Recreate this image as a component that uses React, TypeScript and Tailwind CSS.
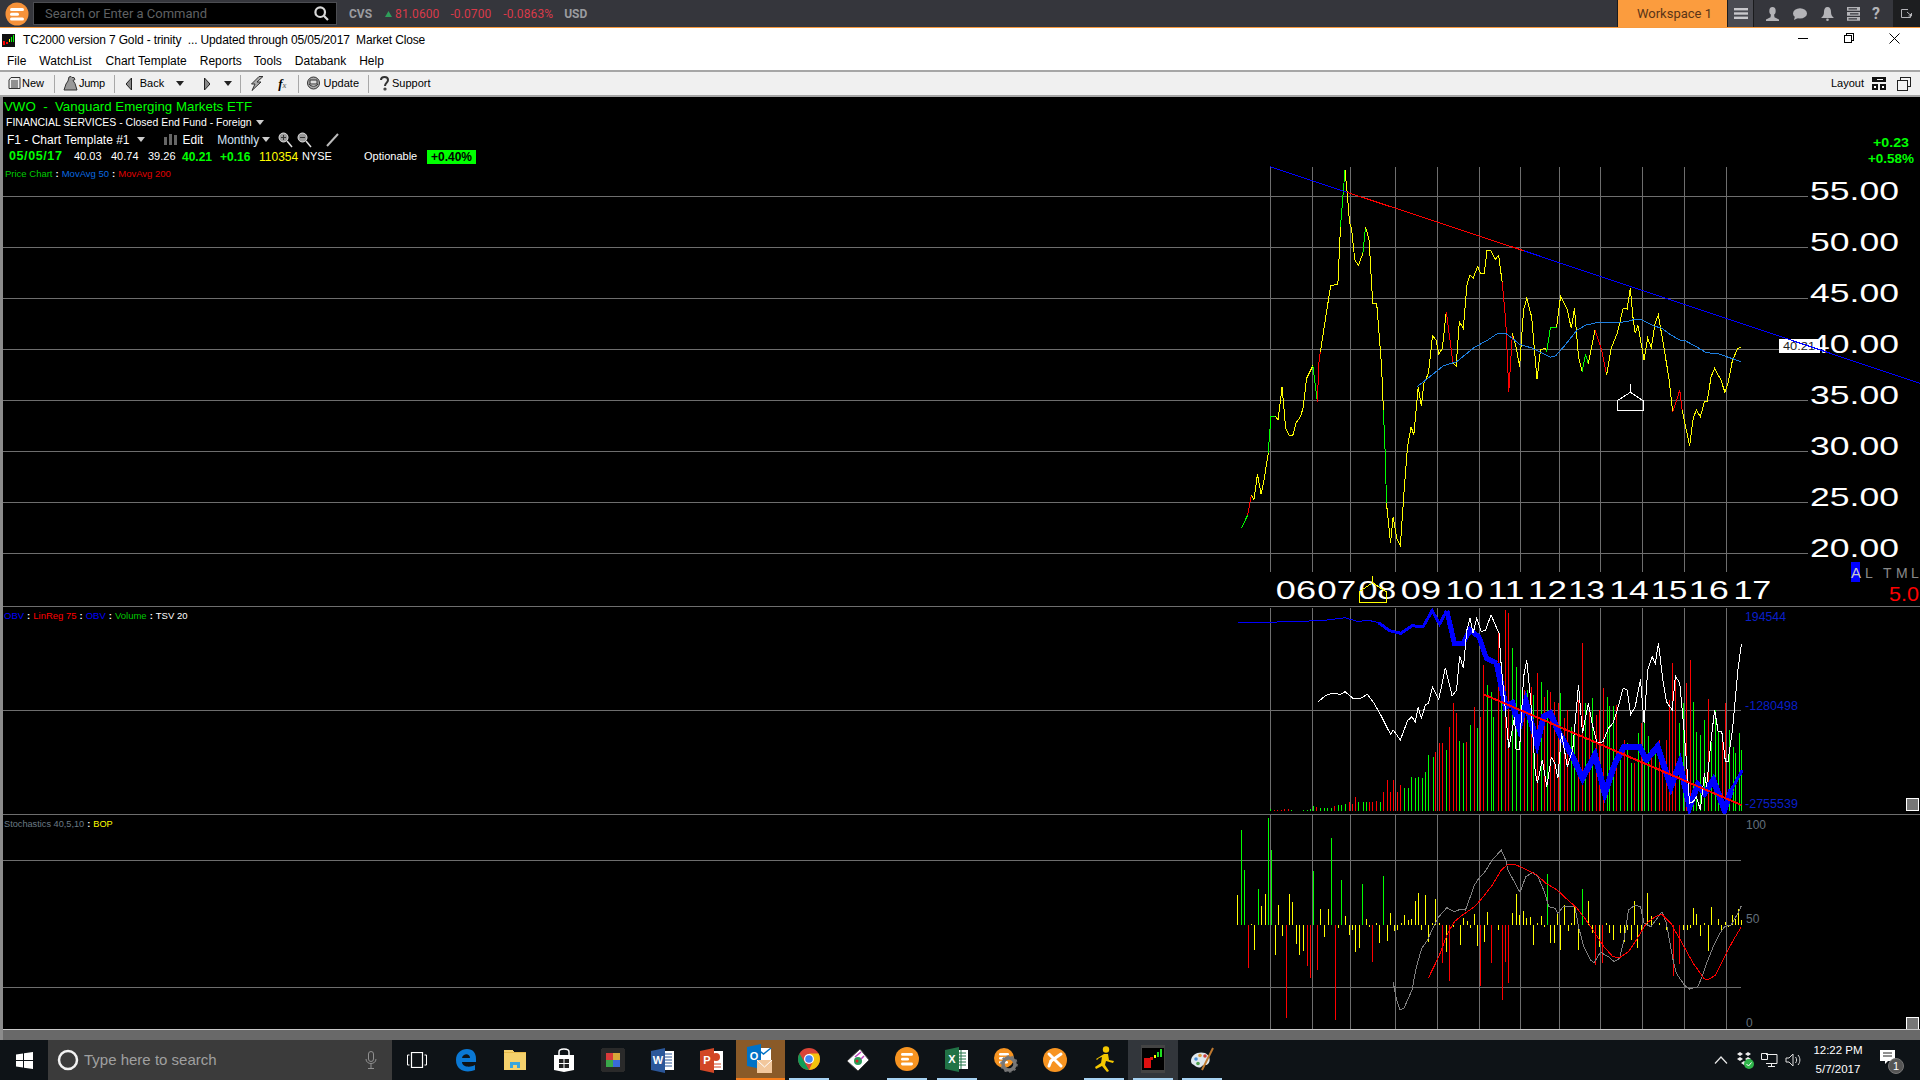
import React from "react";

const G = "#00ff00", R = "#ff0000", Y = "#ffff00";
const zx = (x: number) => 1220 + x / 2.24;
const rx = (x: number) => Math.round(zx(x)) + 0.5;
const toPts = (s: string, oy: number) =>
  s.trim().split(/\s+/).map((p) => {
    const [a, b] = p.split(",").map(Number);
    return `${zx(a).toFixed(1)},${(oy + b / 3).toFixed(1)}`;
  }).join(" ");

const priceSegs: [string, string][] = [
  [G, "48,1105 62,1065"], [R, "62,1065 70,1005"],
  [Y, "70,1005 76,1020 84,942 92,1003 100,950 108,880"], [G, "108,880 114,770 124,768"],
  [Y, "124,768 130,780 139,680 147,805 155,825 163,826 170,790 180,770 186,745 194,655 208,617"],
  [G, "208,617 218,725"], [R, "218,725 222,600 225,575"],
  [Y, "225,575 238,460 248,377 264,372 270,200"], [G, "270,200 280,30"],
  [Y, "280,30 285,100 290,185 295,210 302,300 310,316 320,280"], [G, "320,280 326,200"],
  [Y, "326,200 334,240 342,430 351,430 362,620 366,750"], [G, "366,750 370,880 373,1030"],
  [Y, "373,1030 382,1150 388,1070 396,1135 404,1157 412,1000 420,860 428,800 434,825 444,680 451,737 457,670 467,640 476,527 484,540 490,583 498,565 507,455"],
  [R, "507,455 522,610"],
  [Y, "522,610 529,618 536,485 545,505 553,375 560,345 567,355 577,320 584,340 592,340 598,270 606,270 617,298 624,286 632,365"],
  [R, "632,365 640,480 647,695 655,520"],
  [Y, "655,520 663,560 671,620 680,450 687,415 698,470 710,658 718,570 728,565 732,575"],
  [G, "732,575 740,502 754,502"],
  [Y, "754,502 763,408 778,450 787,505 794,445 803,590 811,635"], [G, "811,635 819,583 825,612"],
  [Y, "825,612 840,510"], [R, "840,510 855,570 866,645"],
  [Y, "866,645 876,565 890,520 903,445 912,447 919,385 925,470 930,520 936,495 950,600 958,535 966,562 975,487 982,465 992,545 1005,650 1014,757"],
  [R, "1014,757 1030,690 1035,750"],
  [Y, "1035,750 1052,857 1060,775 1067,750 1076,770 1085,725 1091,725 1100,650 1108,625 1122,660 1131,697 1138,670 1148,600 1160,565 1168,562"],
];
const ma50 = "440,682 470,650 500,618 530,605 570,562 600,540 622,520 640,520 655,535 670,552 700,565 720,578 740,592 752,587 770,560 800,510 820,495 848,487 880,489 910,485 930,478 945,480 970,497 990,505 1010,525 1030,540 1040,541 1060,555 1090,578 1115,581 1135,590 1168,605";

const vLines = [113, 205, 292, 393, 487, 581, 673, 760, 852, 946, 1040, 1134];
const priceGrid: [string, number][] = [["55.00", 108], ["50.00", 262], ["45.00", 415], ["40.00", 568], ["35.00", 721], ["30.00", 874], ["25.00", 1027], ["20.00", 1180]];
const years: [string, number, number][] = [["06", 125, 215], ["07", 218, 305], ["08", 310, 395], ["09", 405, 495], ["10", 505, 590], ["11", 600, 682], ["12", 690, 777], ["13", 780, 862], ["14", 872, 960], ["15", 965, 1047], ["16", 1050, 1140], ["17", 1150, 1235]];

const volBars: [number, string, number][] = [
  [113,"g",627],[120,"r",630],[128,"r",630],[136,"r",630],[144,"r",628],[152,"r",628],[160,"g",630],[186,"g",630],[194,"g",630],[202,"g",627],[208,"g",618],[216,"r",622],[224,"g",624],[232,"g",624],[240,"g",624],[248,"g",624],[255,"r",618],[265,"g",615],[272,"g",615],[280,"g",612],[288,"r",605],[295,"r",612],[303,"r",590],[310,"g",605],[320,"g",605],[326,"g",605],[334,"r",605],[341,"r",605],[350,"r",603],[358,"g",605],
  [366,"r",575],[373,"r",540],[380,"r",577],[387,"r",540],[396,"r",575],[404,"r",555],[413,"g",563],[420,"g",563],[428,"g",530],[436,"g",535],[444,"g",530],[452,"g",533],[460,"g",515],[467,"g",465],[476,"g",470],[482,"r",457],[490,"r",430],[498,"r",430],[506,"g",450],[514,"r",380],[521,"r",310],[529,"r",340],[536,"g",423],[544,"g",430],[552,"r",425],[560,"g",375],[568,"r",320],[575,"g",385],[582,"r",350],[590,"r",195],[598,"g",255],[606,"g",275],[612,"g",350],[622,"r",95],[630,"g",300],[638,"r",30],[646,"r",40],[655,"g",145],[663,"g",200],[671,"g",270],[680,"r",270],[688,"g",270],[696,"r",260],[702,"g",285],[710,"r",220],[718,"g",245],[725,"r",290],[733,"g",270],[740,"r",275],[748,"r",305],[756,"r",310],[762,"g",280],[770,"r",355],[778,"r",330],[786,"g",380],[794,"g",400],[802,"r",300],[810,"r",130],[818,"g",310],[826,"r",330],[834,"g",295],[842,"r",345],[850,"r",330],[858,"r",265],[866,"g",290],[872,"g",318],[880,"g",318],[888,"r",315],[896,"g",450],[904,"r",420],[912,"g",430],[920,"g",490],[928,"r",490],[936,"g",400],[943,"r",370],[950,"g",360],[958,"g",408],[966,"r",460],[975,"g",435],[983,"r",420],[990,"r",475],[998,"r",420],[1005,"r",300],[1013,"r",190],[1020,"r",230],[1028,"g",370],[1036,"g",310],[1044,"r",250],[1052,"r",180],[1060,"g",305],[1067,"g",395],[1076,"g",405],[1084,"g",360],[1092,"r",298],[1100,"g",425],[1108,"g",330],[1116,"g",395],[1124,"r",400],[1132,"r",308],[1140,"g",390],[1148,"g",440],[1154,"g",460],[1162,"g",400],[1168,"g",450],
];
const obv: [number, string][] = [
  [1, "40,67 110,67 145,65 175,65 210,62 240,60 280,53 310,65 330,60 355,68"],
  [3, "355,68 380,92 405,100 430,77 455,80 475,32 492,72 508,32"],
  [5, "508,32 525,130 545,130 560,90 580,110 597,175 620,190"],
  [6, "620,190 640,320 655,310 670,380 685,305 710,430 725,350 740,340 760,400 790,470 812,535 840,465 862,580 885,490 905,440 940,440 955,480 980,440 1010,560 1030,490 1052,620 1070,555 1085,580 1105,540 1130,630 1145,570"],
  [3, "1145,570 1170,510"],
];
const tsv = "220,305 235,288 250,280 270,283 280,275 298,295 315,295 330,283 345,310 360,345 382,403 388,390 404,420 420,362 430,350 437,367 444,322 451,355 460,315 467,310 476,260 490,298 505,203 520,288 530,270 537,167 545,205 553,90 560,55 567,100 575,55 585,95 595,90 607,45 625,100 630,200 640,340 647,445 660,350 663,447 671,447 680,230 687,180 696,300 706,515 711,550 722,480 732,560 742,472 750,490 757,535 765,400 778,500 790,450 803,255 812,400 825,310 835,380 845,430 858,425 870,385 880,370 890,330 903,265 912,270 920,343 930,320 942,238 950,370 958,210 968,170 975,190 982,130 992,240 1000,305 1013,330 1020,228 1030,250 1040,400 1052,610 1060,605 1067,590 1076,630 1085,520 1090,560 1100,420 1108,330 1116,395 1124,395 1132,485 1138,485 1148,390 1160,210 1168,132";

const bop: [number, string, number][] = [
  [38,"y",255],[46,"g",60],[54,"g",180],[62,"r",473],[70,"y",342],[77,"y",420],[84,"g",237],[92,"y",288],[100,"y",252],[108,"g",25],[115,"g",120],[123,"y",435],[131,"y",285],[139,"y",378],[147,"r",623],[155,"y",252],[162,"y",275],[171,"y",402],[178,"y",435],[186,"y",422],[194,"r",468],[202,"r",503],[209,"g",183],[217,"r",480],[225,"y",297],[233,"y",380],[241,"y",297],[249,"g",85],[257,"r",630],[265,"y",354],[272,"g",210],[280,"y",318],[288,"y",374],[295,"y",360],[303,"y",425],[311,"y",415],[319,"g",222],[326,"y",328],[334,"y",350],[341,"r",455],[350,"y",339],[357,"y",400],[366,"g",198],[373,"y",393],[381,"y",308],[389,"y",362],[397,"y",360],[405,"y",340],[413,"y",315],[420,"y",330],[428,"y",327],[436,"y",272],[444,"y",250],[451,"y",360],[459,"y",255],[467,"y",395],[474,"y",340],[482,"y",267],[490,"y",340],[498,"r",458],[506,"y",425],[514,"r",513],[522,"y",350],[529,"y",345],[537,"y",404],[545,"y",325],[553,"y",332],[560,"y",355],[568,"y",313],[576,"y",408],[582,"r",527],[591,"y",395],[599,"y",305],[607,"r",460],[615,"y",345],[623,"y",360],[631,"r",570],[638,"r",455],[646,"r",518],[655,"y",310],[662,"y",252],[670,"y",315],[678,"y",303],[686,"y",325],[694,"y",320],[702,"y",404],[710,"y",338],[718,"y",318],[725,"y",350],[732,"g",192],[740,"y",400],[748,"y",398],[755,"y",310],[762,"y",420],[771,"y",285],[779,"y",362],[787,"y",340],[794,"y",290],[802,"y",420],[810,"g",237],[818,"y",345],[825,"y",272],[834,"y",370],[841,"r",465],[849,"y",410],[856,"r",460],[864,"y",340],[872,"y",370],[881,"y",390],[888,"y",345],[896,"y",370],[904,"y",395],[912,"y",360],[920,"y",390],[928,"y",272],[935,"y",415],[943,"y",365],[950,"y",345],[957,"y",248],[965,"y",318],[975,"y",345],[983,"y",340],[990,"y",345],[1000,"y",360],[1014,"r",498],[1022,"y",345],[1029,"r",462],[1037,"y",360],[1045,"y",360],[1052,"y",355],[1060,"y",295],[1067,"y",312],[1076,"y",378],[1084,"y",340],[1092,"y",424],[1100,"y",290],[1108,"y",345],[1115,"y",327],[1123,"y",362],[1131,"y",337],[1139,"y",350],[1147,"y",315],[1154,"y",328],[1161,"y",297],[1168,"y",330],
];
const stochGray = "388,517 395,565 403,600 412,595 430,540 440,470 452,415 465,390 480,345 490,320 508,293 525,305 540,297 550,300 570,225 580,205 592,188 610,150 630,120 640,150 645,180 655,205 672,247 685,200 700,187 712,200 725,240 737,290 750,295 757,310 770,288 785,290 795,290 803,350 815,410 830,450 838,458 852,427 870,440 883,455 895,445 905,390 915,300 930,285 942,290 950,340 965,350 990,305 1000,340 1015,450 1022,490 1040,525 1052,537 1070,530 1080,500 1090,460 1105,410 1120,370 1130,350 1145,345 1160,310 1168,287";
const stochRed = "467,503 490,440 510,370 525,335 540,318 570,290 590,260 610,225 630,180 645,163 660,163 680,175 710,195 730,220 755,240 775,265 800,295 820,330 840,370 860,410 880,440 895,443 915,425 935,385 955,340 975,320 990,313 1010,340 1035,400 1060,460 1085,507 1095,508 1110,495 1130,440 1150,390 1168,350";

const col = (c: string) => (c === "g" ? G : c === "r" ? R : Y);
const GRID = "#6e6e6e";

function Line({ pts, color, oy, w = 1 }: { pts: string; color: string; oy: number; w?: number }) {
  return <polyline points={toPts(pts, oy)} fill="none" stroke={color} strokeWidth={w} />;
}

function PriceSvg() {
  return (
    <svg viewBox="3 97 1917 509" className="col-start-1 row-start-1 w-full h-full font-['Liberation_Sans',sans-serif]" shapeRendering="crispEdges">
      {priceGrid.map(([, y]) => <line key={y} x1={3} x2={1808} y1={Math.round(160 + y / 3) + 0.5} y2={Math.round(160 + y / 3) + 0.5} stroke={GRID} />)}
      {vLines.map((x) => <line key={x} x1={rx(x)} x2={rx(x)} y1={167} y2={572} stroke={GRID} />)}
      {priceGrid.map(([t, y]) => (
        <text key={t} x={1810} y={160 + y / 3 + 4} textLength={89} lengthAdjust="spacingAndGlyphs" fontSize={26} fill="#fff">{t}</text>
      ))}
      {years.map(([t, a, b]) => (
        <text key={t} x={zx(a)} y={599} textLength={(b - a) / 2.24} lengthAdjust="spacingAndGlyphs" fontSize={26} fill="#fff">{t}</text>
      ))}
      <rect x={1779} y={339} width={41} height={14} fill="#fff" />
      <text x={1783} y={350} fontSize={11} fill="#222" textLength={32} lengthAdjust="spacingAndGlyphs">40.21</text>
      {priceSegs.map(([c, p], i) => <Line key={i} pts={p} color={c} oy={160} />)}
      <Line pts={ma50} color="#1e7fe0" oy={160} />
      <Line pts="113,20 285,97" color="#0000ff" oy={160} />
      <Line pts="285,97 680,272" color="#ff0000" oy={160} />
      <Line pts="680,272 1568,670" color="#0000ff" oy={160} />
      <Line pts="919,672 919,697" color="#fff" oy={160} />
      <polygon points={toPts("919,697 948,722 948,750 890,750 890,722", 160)} fill="none" stroke="#fff" />
      <Line pts="342,1248 342,1268" color={Y} oy={160} />
      <polygon points={toPts("342,1268 372,1295 372,1328 312,1328 312,1295", 160)} fill="none" stroke={Y} />
      <rect x={1851} y={562} width={9} height={20} fill="#0000ff" />
      <text x={1851} y={578} fontSize={15} fill="#c8c8c8">A</text>
      <text x={1865} y={578} fontSize={14} fill="#8a8a8a">L</text>
      <text x={1883} y={578} fontSize={14} fill="#8a8a8a">T</text>
      <text x={1896} y={578} fontSize={14} fill="#8a8a8a">M</text>
      <text x={1911} y={578} fontSize={14} fill="#8a8a8a">L</text>
      <text x={1889} y={601} fontSize={21} fill="#ff0000" textLength={30} lengthAdjust="spacingAndGlyphs">5.0</text>
      <text x={1873} y={147} fontSize={13} fontWeight={700} fill={G} textLength={36} lengthAdjust="spacingAndGlyphs">+0.23</text>
      <text x={1868} y={163} fontSize={13} fontWeight={700} fill={G} textLength={46} lengthAdjust="spacingAndGlyphs">+0.58%</text>
    </svg>
  );
}

function VolumeSvg() {
  return (
    <svg viewBox="3 607 1917 207" className="col-start-1 row-start-1 w-full h-full font-['Liberation_Sans',sans-serif]" shapeRendering="crispEdges">
      <line x1={3} x2={1741} y1={710.5} y2={710.5} stroke={GRID} />
      {vLines.map((x) => <line key={x} x1={rx(x)} x2={rx(x)} y1={608} y2={811} stroke={GRID} />)}
      {volBars.map(([x, c, t], i) => <line key={i} x1={rx(x)} x2={rx(x)} y1={600 + t / 3} y2={811} stroke={col(c)} />)}
      {obv.map(([w, p], i) => <Line key={i} pts={p} color="#0000ff" oy={600} w={w} />)}
      <Line pts={tsv} color="#fff" oy={600} />
      <Line pts="590,283 1168,615" color="#ff0000" oy={600} w={2} />
      <text x={1745} y={621} fontSize={12} fill="#0a1fc8" textLength={41} lengthAdjust="spacingAndGlyphs">194544</text>
      <text x={1745} y={710} fontSize={12} fill="#0a1fc8" textLength={53} lengthAdjust="spacingAndGlyphs">-1280498</text>
      <text x={1745} y={808} fontSize={12} fill="#0a1fc8" textLength={53} lengthAdjust="spacingAndGlyphs">-2755539</text>
      <rect x={1906.5} y={798.5} width={12} height={12} fill="#777" stroke="#fff" />
    </svg>
  );
}

function StochSvg() {
  return (
    <svg viewBox="3 815 1917 214" className="col-start-1 row-start-1 w-full h-full font-['Liberation_Sans',sans-serif]" shapeRendering="crispEdges">
      <line x1={3} x2={1741} y1={860.5} y2={860.5} stroke={GRID} />
      <line x1={3} x2={1741} y1={987.5} y2={987.5} stroke={GRID} />
      {vLines.map((x) => <line key={x} x1={rx(x)} x2={rx(x)} y1={815} y2={1029} stroke={GRID} />)}
      {bop.map(([x, c, t], i) => <line key={i} x1={rx(x)} x2={rx(x)} y1={810 + t / 3} y2={925} stroke={col(c)} />)}
      <Line pts={stochGray} color="#808080" oy={810} />
      <Line pts={stochRed} color="#ff0000" oy={810} />
      <text x={1746} y={829} fontSize={12} fill="#64707c">100</text>
      <text x={1746} y={923} fontSize={12} fill="#64707c">50</text>
      <text x={1746} y={1027} fontSize={12} fill="#64707c">0</text>
      <path d="M1906.5 1029 V1017.5 H1918.5 V1029" fill="#777" stroke="#fff" />
    </svg>
  );
}

const Sep = ({ ml }: { ml: string }) => <div className={`w-px h-[18px] bg-[#a8a8a8] ${ml}`} />;
const Caret = ({ className, color = "#222" }: { className?: string; color?: string }) => (
  <svg width="8" height="5" viewBox="0 0 8 5" className={className}><path d="M0 0h8L4 5z" fill={color} /></svg>
);

function TopBar() {
  return (
    <div className="flex h-[27px] bg-[#35363c] items-center shrink-0 font-['Roboto',sans-serif]">
      <div className="w-[33px] flex justify-center">
        <svg width="24" height="24" viewBox="0 0 24 24">
          <circle cx="12" cy="12" r="11.5" fill="#f6923a" />
          <rect x="5" y="6" width="14" height="3" rx="1.5" fill="#fff" />
          <rect x="5" y="10.7" width="9" height="3" rx="1.5" fill="#fff" />
          <rect x="5" y="15.4" width="14" height="3" rx="1.5" fill="#fff" />
        </svg>
      </div>
      <div className="w-[304px] h-[23px] bg-black border border-[#4c4d52] flex items-center pl-[11px] pr-[7px] justify-between">
        <span className="text-[13px] text-[#5f6063]">Search or Enter a Command</span>
        <svg width="15" height="15" viewBox="0 0 15 15" fill="none" stroke="#d8d8d8" strokeWidth="2.2"><circle cx="6.2" cy="6.2" r="4.8" /><path d="M9.8 9.8 14 14" /></svg>
      </div>
      <span className="ml-[12px] text-[12px] font-bold text-[#9b9ca0]">CVS</span>
      <svg width="7" height="6" viewBox="0 0 7 6" className="ml-[13px]"><path d="M3.5 0 7 6H0z" fill="#2f9e5a" /></svg>
      <span className="ml-[3px] text-[12px] tracking-[0.1px] text-[#d93a4a]">81.0600</span>
      <span className="ml-[11px] text-[12px] tracking-[0.1px] text-[#d93a4a]">-0.0700</span>
      <span className="ml-[12px] text-[12px] tracking-[0.1px] text-[#d93a4a]">-0.0863%</span>
      <span className="ml-[11px] text-[12px] font-bold text-[#9b9ca0]">USD</span>
      <div className="flex-1" />
      <div className="w-px h-full bg-[#1a1b1d]" />
      <div className="w-[109px] h-full bg-[#fb9c3e] flex items-center justify-end pr-[15px] text-[13px] text-[#5a3416]">Workspace 1</div>
      <div className="w-px h-full bg-[#1a1b1d]" />
      <div className="w-[25px] h-full bg-[#4a4b52] flex items-center justify-center">
        <svg width="14" height="11" viewBox="0 0 14 11" fill="#c8c8cc"><rect width="14" height="2.4" /><rect y="4.3" width="14" height="2.4" /><rect y="8.6" width="14" height="2.4" /></svg>
      </div>
      <div className="w-px h-full bg-[#1a1b1d]" />
      <div className="w-[139px] h-full flex items-center">
        <svg width="13" height="14" viewBox="0 0 13 14" className="ml-[12px]" fill="#b4b4b8"><ellipse cx="6.5" cy="4" rx="3.2" ry="4" /><path d="M5 7h3l.5 3.2L13 12.5V14H0v-1.5L4.500 10.200z" /></svg>
        <svg width="14" height="12" viewBox="0 0 14 12" className="ml-[14px]" fill="#b4b4b8"><ellipse cx="7" cy="5.4" rx="7" ry="5.2" /><path d="M2 8l-1 4 4-2z" /></svg>
        <svg width="13" height="14" viewBox="0 0 13 14" className="ml-[14px]" fill="#b4b4b8"><path d="M6.500 0C9 0 10 2 10 5c0 3 1 4 3 6H0c2-2 3-3 3-6 0-3 1-5 3.500-5z" /><circle cx="6.500" cy="12.700" r="1.300" /></svg>
        <svg width="13" height="14" viewBox="0 0 13 14" className="ml-[13px]" fill="#b4b4b8"><path fillRule="evenodd" d="M0 0h13v3.800H0zM1.500 1.200v1.400H10V1.200zM0 5h13v3.800H0zM3 6.200v1.400h8.500V6.200zM0 10h13v3.800H0zM1.500 11.200v1.400H10v-1.400z" /></svg>
        <span className="ml-[12px] text-[16px] font-bold text-[#b4b4b8] leading-none">?</span>
      </div>
      <div className="w-[27px] h-full bg-[#1d1e20] flex items-center justify-center">
        <svg width="12" height="10" viewBox="0 0 12 10" fill="none" stroke="#b4b4b8"><path d="M7 .5H.5v8h9V5" /><path d="M6 3l4 3.500M10.500 4v3h-3" /></svg>
      </div>
    </div>
  );
}

function TitleMenu() {
  const menu: [string, string][] = [["File", "ml-[7px]"], ["WatchList", "ml-[13px]"], ["Chart Template", "ml-[14px]"], ["Reports", "ml-[13px]"], ["Tools", "ml-[12px]"], ["Databank", "ml-[13px]"], ["Help", "ml-[13px]"]];
  return (
    <div className="bg-white h-[42px] shrink-0 font-['Liberation_Sans',sans-serif] text-black">
      <div className="flex h-[22px] items-center">
        <svg width="13" height="13" viewBox="0 0 13 13" className="ml-[2px] mt-[2px]" shapeRendering="crispEdges">
          <rect width="13" height="13" fill="#111" /><rect x="1" y="7" width="2" height="4" fill="#f00" /><rect x="4" y="8" width="2" height="2" fill="#f00" /><rect x="7" y="5" width="1" height="3" fill="#ff0" /><rect x="9" y="3" width="1" height="5" fill="#0f0" /><rect x="11" y="1" width="1" height="7" fill="#0f0" />
        </svg>
        <span className="ml-[8px] mt-[2px] text-[12px] tracking-[-0.14px] whitespace-pre">TC2000 version 7 Gold - trinity  ... Updated through 05/05/2017  Market Close</span>
        <div className="flex-1" />
        <svg width="10" height="1" className="mt-[-2px]"><rect width="10" height="1" fill="#000" /></svg>
        <svg width="10" height="10" viewBox="0 0 10 10" className="ml-[36px] mt-[-2px]" fill="none" stroke="#000" shapeRendering="crispEdges"><path d="M.5 2.500h7v7h-7zM2.500 2.500v-2h7v7h-2" /></svg>
        <svg width="11" height="11" viewBox="0 0 11 11" className="ml-[35px] mr-[20px] mt-[-2px]" stroke="#000"><path d="M.5.5l10 10M10.500.5l-10 10" /></svg>
      </div>
      <div className="flex h-[20px] items-center text-[12px] pt-[1px]">
        {menu.map(([t, m]) => <span key={t} className={m}>{t}</span>)}
      </div>
    </div>
  );
}

function Toolbar() {
  return (
    <div className="h-[27px] shrink-0 bg-[#f0f0f0] border-t-[2px] border-b-[2px] border-[#a6a6a6] flex items-center text-[11px] text-black font-['Liberation_Sans',sans-serif]">
      <svg width="13" height="14" viewBox="0 0 13 14" className="ml-[8px]" fill="#eee" stroke="#333"><path d="M3 .5h9v11H1V3z" /><path d="M3 4h7M3 6h7M3 8h7M3 10h7" /></svg>
      <span className="ml-[1px]">New</span>
      <Sep ml="ml-[10px]" />
      <svg width="16" height="15" viewBox="0 0 16 15" className="ml-[8px]" fill="#999" stroke="#333"><path d="M1 14l2-6 2-3 1-4 2-.5 1 1 2 0 1 2-2 1 2 3 2 6.500z" /></svg>
      <span className="tracking-[-0.3px]">Jump</span>
      <Sep ml="ml-[9px]" />
      <svg width="6" height="12" viewBox="0 0 6 12" className="ml-[11px]"><path d="M5.500 0v12L0 6z" fill="#888" stroke="#222" /></svg>
      <span className="ml-[8px]">Back</span>
      <Caret className="ml-[12px]" />
      <svg width="6" height="12" viewBox="0 0 6 12" className="ml-[20px]"><path d="M.5 0v12L6 6z" fill="#888" stroke="#222" /></svg>
      <Caret className="ml-[14px]" />
      <Sep ml="ml-[8px]" />
      <svg width="14" height="15" viewBox="0 0 14 15" className="ml-[9px]" fill="#aaa" stroke="#333"><path d="M9 .5h4L7 6h4L2 14.500 5 8H1.500z" /></svg>
      <span className="ml-[14px] font-['Liberation_Serif',serif] italic font-bold text-[13px]">f<span className="text-[8px] text-[#777]">x</span></span>
      <Sep ml="ml-[11px]" />
      <svg width="15" height="15" viewBox="0 0 15 15" className="ml-[7px]" fill="#aaa" stroke="#333"><circle cx="7.500" cy="7" r="6" /><path d="M3 8c2 3 7 3 9 0M4 4h7v4H4z" fill="#ddd" /></svg>
      <span className="ml-[3px]">Update</span>
      <Sep ml="ml-[9px]" />
      <svg width="11" height="15" viewBox="0 0 11 15" className="ml-[10px]" fill="none" stroke="#333" strokeWidth="2"><path d="M2 4c0-4 7-4 7 0 0 3-3 2.500-3 6" /><circle cx="6" cy="13" r=".6" /></svg>
      <span className="ml-[2px]">Support</span>
      <div className="flex-1" />
      <span>Layout</span>
      <svg width="14" height="13" viewBox="0 0 14 13" className="ml-[8px]" shapeRendering="crispEdges"><rect width="14" height="5" fill="#111" /><rect y="7" width="6" height="6" fill="#111" /><rect x="8" y="7" width="6" height="6" fill="#111" /><rect x="5" y="2" width="6" height="1" fill="#fff" /><rect x="2" y="9" width="2" height="2" fill="#fff" /><rect x="10" y="9" width="2" height="2" fill="#fff" /></svg>
      <svg width="14" height="14" viewBox="0 0 14 14" className="ml-[11px] mr-[9px]" fill="#f5f5f5" stroke="#222" shapeRendering="crispEdges"><path d="M3.500.5h10v9h-10z" /><path d="M.5 3.500h10v10H.5z" /></svg>
    </div>
  );
}

function ChartHeader() {
  return (
    <div className="col-start-1 row-start-1 self-start pl-[1px] pt-[2px] text-white font-['Liberation_Sans',sans-serif]">
      <div className="h-[15px] leading-[15px] text-[13.3px] text-[#00ff00] whitespace-pre">VWO  -  Vanguard Emerging Markets ETF</div>
      <div className="h-[17px] flex items-center text-[10.5px] pl-[2px]">
        FINANCIAL SERVICES - Closed End Fund - Foreign
        <Caret className="ml-[4px]" color="#ccc" />
      </div>
      <div className="h-[17px] flex items-center text-[12px] pl-[3px]">
        <span>F1 - Chart Template #1</span>
        <Caret className="ml-[7px]" color="#ccc" />
        <svg width="14" height="11" viewBox="0 0 14 11" className="ml-[19px]" fill="#666"><rect y="3" width="3" height="8" /><rect x="5" width="3" height="11" /><rect x="10" y="1" width="3" height="10" /></svg>
        <span className="ml-[5px]">Edit</span>
        <span className="ml-[14px] text-[#d6e4f5]">Monthly</span>
        <Caret className="ml-[3px]" color="#ccc" />
        <svg width="15" height="16" viewBox="0 0 15 16" className="ml-[8px]" fill="#999" stroke="#e0e0e0"><circle cx="5.500" cy="5.500" r="4.500" /><path d="M9 9l5 6" strokeWidth="1.500" /><path d="M3 5.500h5M5.500 3v5" stroke="#333" /></svg>
        <svg width="15" height="16" viewBox="0 0 15 16" className="ml-[4px]" fill="#999" stroke="#e0e0e0"><circle cx="5.500" cy="5.500" r="4.500" /><path d="M9 9l5 6" strokeWidth="1.500" /><path d="M3 5.500h5" stroke="#333" /></svg>
        <svg width="13" height="14" viewBox="0 0 13 14" className="ml-[14px]" stroke="#bbb" strokeWidth="2"><path d="M1 13 12 1" /></svg>
      </div>
      <div className="h-[17px] flex items-center text-[11px] pl-[5px]">
        <span className="w-[65px] font-bold text-[12.5px] tracking-[0.6px] text-[#00ff00]">05/05/17</span>
        <span className="w-[37px]">40.03</span>
        <span className="w-[37px]">40.74</span>
        <span className="w-[34px]">39.26</span>
        <span className="w-[38px] font-bold text-[12px] text-[#00ff00]">40.21</span>
        <span className="w-[39px] font-bold text-[12px] text-[#00ff00]">+0.16</span>
        <span className="w-[43px] text-[12px] text-[#ffff00]">110354</span>
        <span className="w-[62px]">NYSE</span>
        <span className="w-[63px]">Optionable</span>
        <span className="w-[49px] h-[14px] leading-[14px] bg-[#00ff00] text-black text-[12px] font-bold text-center">+0.40%</span>
      </div>
      <div className="h-[14px] mt-[2px] flex items-center text-[9.5px] pl-[1px]">
        <span className="text-[#00cc00]">Price Chart</span>
        <span className="mx-[3px] font-bold">:</span>
        <span className="text-[#0a6ae0]">MovAvg 50</span>
        <span className="mx-[3px] font-bold">:</span>
        <span className="text-[#e00000]">MovAvg 200</span>
      </div>
    </div>
  );
}

function Tray() {
  return (
    <div className="flex items-center h-full text-white font-['Liberation_Sans',sans-serif]">
      <svg width="14" height="8" viewBox="0 0 14 8" fill="none" stroke="#e8e8e8" strokeWidth="1.200"><path d="M1 7.500 7 1l6 6.500" /></svg>
      <svg width="17" height="18" viewBox="0 0 17 18" className="ml-[9px]"><g fill="#eee"><path d="M3 1l3 2-3 2-3-2zM11 1l3 2-3 2-3-2zM3 6l3 2-3 2-3-2zM11 6l3 2-3 2-3-2zM7 10l3 2-3 2-3-2z" /></g><circle cx="12" cy="13" r="5" fill="#2fb44a" /><path d="M9.500 13l2 2 3-3.500" fill="none" stroke="#fff" /></svg>
      <svg width="17" height="15" viewBox="0 0 17 15" className="ml-[7px]" fill="none" stroke="#eee"><path d="M5 1.500h11v9H5M10.500 10.500v3M7 13.500h7M.5.500h6v6h-6z" /></svg>
      <svg width="16" height="14" viewBox="0 0 16 14" className="ml-[7px]" fill="none" stroke="#ddd"><path d="M1 5v4h3l4 4V1L4 5zM10.500 4c1.500 2 1.500 4 0 6M13 2c2.500 3 2.500 7 0 10" /></svg>
      <div className="ml-[8px] w-[58px] text-center text-[11.5px] leading-[19px]">
        <div>12:22 PM</div>
        <div>5/7/2017</div>
      </div>
      <div className="ml-[12px] mr-[17px] w-[24px] h-[24px] grid">
        <svg width="24" height="24" viewBox="0 0 24 24" className="col-start-1 row-start-1"><path d="M1 2h15v11H9l-3 3v-3H1z" fill="#fff" /><path d="M4 5h9M4 8h9" stroke="#222" /></svg>
        <div className="col-start-1 row-start-1 self-end justify-self-end w-[16px] h-[16px] mb-[-2px] mr-[-1px] rounded-full bg-[#555] border border-[#777] text-[11px] leading-[14px] text-center text-white">1</div>
      </div>
    </div>
  );
}

const Cell = ({ children, className = "" }: { children: React.ReactNode; className?: string }) => (
  <div className={`w-[49.1px] h-full flex items-center justify-center ${className}`}>{children}</div>
);
const Under = ({ children, className = "" }: { children: React.ReactNode; className?: string }) => (
  <div className={`w-[49.1px] h-full flex flex-col items-center ${className}`}>
    <div className="flex-1 flex items-center justify-center">{children}</div>
    <div className="w-[40px] h-[2px] bg-[#a6d2f2]" />
  </div>
);

function Taskbar() {
  return (
    <div className="h-[40px] shrink-0 flex bg-[#0e1317] font-['Liberation_Sans',sans-serif]">
      <div className="w-[48px] flex items-center justify-center">
        <svg width="17" height="17" viewBox="0 0 17 17" fill="#fff"><path d="M0 2.400 7 1.400V8H0zM8 1.300 17 0v8H8zM0 9h7v6.600L0 14.600zM8 9h9v8l-9-1.300z" /></svg>
      </div>
      <div className="w-[344px] bg-[#3b3b3b] flex items-center">
        <svg width="22" height="22" viewBox="0 0 22 22" className="ml-[9px]" fill="none" stroke="#f2f2f2" strokeWidth="2.500"><circle cx="11" cy="11" r="9" /></svg>
        <span className="ml-[5px] text-[15px] text-[#a0a0a0]">Type here to search</span>
        <div className="flex-1" />
        <svg width="12" height="18" viewBox="0 0 12 18" className="mr-[15px]" fill="none" stroke="#909090"><rect x="3.500" y=".5" width="5" height="10" rx="2.500" /><path d="M1 8c0 6 10 6 10 0M6 13v4M3 17.500h6" /></svg>
      </div>
      <Cell><svg width="20" height="16" viewBox="0 0 20 16" fill="none" stroke="#fff"><rect x="4.500" y=".5" width="11" height="15" strokeWidth="1.200" /><path d="M2.500 3H.5v10h2M17.500 3h2v10h-2" /></svg></Cell>
      <Cell><svg width="22" height="24" viewBox="0 0 22 24"><path d="M1 12C1 5 6 1 12 1c6 0 9 4 9 10v3H7c0 5 8 6 13 3v5c-7 3-19 2-19-10zM7 10h8c0-5-7-5-8 0z" fill="#0a78d4" /></svg></Cell>
      <Cell><svg width="22" height="20" viewBox="0 0 22 20" shapeRendering="crispEdges"><path d="M0 0h8l2 2h12v18H0z" fill="#f5d16c" /><rect x="0" y="2" width="22" height="1" fill="#e6b94a" /><path d="M6 18v-6h10v6h-3v-3H9v3z" fill="#39a6dd" /></svg></Cell>
      <Cell><svg width="20" height="24" viewBox="0 0 20 24"><path d="M0 7h20v15L10 24 0 22z" fill="#fff" /><path d="M5 8V4c0-4 10-4 10 0v4" fill="none" stroke="#fff" strokeWidth="1.500" /><path d="M5 11h4.500v4H5zM10.500 11H15v4h-4.500zM5 16h4.500v4H5zM10.500 16H15v4h-4.500z" fill="#222" /></svg></Cell>
      <Cell><svg width="24" height="24" viewBox="0 0 24 24" shapeRendering="crispEdges"><rect width="24" height="24" rx="3" fill="#2a2a2a" /><rect x="5" y="5" width="7" height="7" fill="#d93a3a" /><rect x="12" y="5" width="7" height="7" fill="#d9a83a" /><rect x="5" y="12" width="7" height="7" fill="#3aa84a" /><rect x="12" y="12" width="7" height="7" fill="#3a6ad9" /></svg></Cell>
      <Cell><svg width="23" height="25" viewBox="0 0 23 25"><path d="M8 3h15v19H8z" fill="#fff" /><path d="M11 6h10M11 9h10M11 12h10M11 15h10M11 18h10" stroke="#2b579a" /><path d="M0 3l14-3v25L0 22z" fill="#2b579a" /><text x="7" y="16" fontSize="11" fontWeight="700" fill="#fff" textAnchor="middle">W</text></svg></Cell>
      <Cell><svg width="23" height="25" viewBox="0 0 23 25"><path d="M8 3h15v19H8z" fill="#fff" /><circle cx="16" cy="9" r="4" fill="#d24726" /><path d="M13 16h8M13 19h8" stroke="#d24726" /><path d="M0 3l14-3v25L0 22z" fill="#d24726" /><text x="7" y="16" fontSize="11" fontWeight="700" fill="#fff" textAnchor="middle">P</text></svg></Cell>
      <Cell className="bg-[#8a5a28] border-b-[2px] border-[#f57c1a]"><svg width="26" height="30" viewBox="0 0 26 30"><rect x="9" y="4" width="15" height="12" fill="#fff" /><path d="M9 4l7.500 6L24 4" fill="none" stroke="#0072c6" strokeWidth="1.500" /><path d="M0 3l14-3v25L0 22z" fill="#0072c6" /><text x="7" y="16" fontSize="11" fontWeight="700" fill="#fff" textAnchor="middle">O</text><rect x="10" y="16" width="15" height="13" fill="#f2c79c" /><path d="M10 16l7.500 7L25 16" fill="none" stroke="#fff" /></svg></Cell>
      <Under><svg width="22" height="22" viewBox="0 0 22 22"><circle cx="11" cy="11" r="11" fill="#db4437" /><path d="M11 22A11 11 0 0 1 1.500 5.500L7 15z" fill="#0f9d58" /><path d="M11 22a11 11 0 0 0 9.500-16.500H11l4 8z" fill="#f4c20d" /><circle cx="11" cy="11" r="5" fill="#fff" /><circle cx="11" cy="11" r="3.800" fill="#4285f4" /></svg></Under>
      <Cell><svg width="24" height="24" viewBox="0 0 24 24"><path d="M14 1l9 11-11 11L1 13z" fill="#fff" stroke="#444" /><circle cx="12" cy="13" r="4" fill="#2a9d5a" /><circle cx="11" cy="13" r="1.500" fill="#d22" /><path d="M15 4l-6 5M18 8l-3 3" stroke="#c040c0" strokeWidth="1.500" /></svg></Cell>
      <Under><svg width="24" height="24" viewBox="0 0 24 24"><circle cx="12" cy="12" r="12" fill="#f79421" /><rect x="6" y="6" width="12" height="2.800" rx="1.400" fill="#fff" /><rect x="6" y="10.800" width="8" height="2.800" rx="1.400" fill="#fff" /><rect x="6" y="15.600" width="12" height="2.800" rx="1.400" fill="#fff" /></svg></Under>
      <Under><svg width="23" height="25" viewBox="0 0 23 25"><path d="M8 3h15v19H8z" fill="#fff" /><path d="M13 6h8M13 9h8M13 12h8M13 15h8M13 18h8" stroke="#217346" /><path d="M16 3v19" stroke="#217346" /><path d="M0 3l14-3v25L0 22z" fill="#217346" /><text x="7" y="16" fontSize="11" fontWeight="700" fill="#fff" textAnchor="middle">X</text></svg></Under>
      <Cell><svg width="24" height="26" viewBox="0 0 24 26"><circle cx="10" cy="11" r="10" fill="#f79421" /><rect x="5" y="6" width="10" height="2.400" rx="1.200" fill="#fff" /><rect x="5" y="10" width="6" height="2.400" rx="1.200" fill="#fff" /><rect x="5" y="14" width="9" height="2.400" rx="1.200" fill="#fff" /><circle cx="15" cy="17" r="6" fill="none" stroke="#777" strokeWidth="3.500" /><circle cx="15" cy="17" r="8" fill="none" stroke="#777" strokeWidth="1.500" strokeDasharray="2.500 2.500" /></svg></Cell>
      <Cell><svg width="24" height="24" viewBox="0 0 24 24"><circle cx="12" cy="12" r="12" fill="#f79421" /><path d="M6 6l12 12M18 6 8 13" stroke="#fff" strokeWidth="3" strokeLinecap="round" /><path d="M8 13l-2 5" stroke="#fff" strokeWidth="3" strokeLinecap="round" /></svg></Cell>
      <Under><svg width="20" height="26" viewBox="0 0 20 26"><circle cx="12" cy="3.500" r="3.200" fill="#f5c800" /><path d="M10 8l4 0 1 6 5 1-1 2-7-2-1 4 4 6-2 1-5-6-6 3-1-2 6-4 1-6-3 1-2 2-1-1z" fill="#f5c800" /></svg></Under>
      <Under className="bg-[#32363b]"><svg width="24" height="28" viewBox="0 0 24 28" shapeRendering="crispEdges"><rect width="24" height="28" fill="#444" /><rect x="1" y="3" width="22" height="22" fill="#000" /><rect x="3" y="13" width="7" height="10" fill="#e01010" /><rect x="9" y="12" width="3" height="3" fill="#e01010" /><rect x="13" y="10" width="2" height="3" fill="#ff0" /><rect x="16" y="7" width="2" height="5" fill="#20e020" /><rect x="19" y="4" width="2" height="8" fill="#20e020" /></svg></Under>
      <Under><svg width="24" height="26" viewBox="0 0 24 26"><path d="M1 15C1 8 9 5 15 7c5 2 6 8 3 11-2 2-4 0-6 2-2 3-6 1-8-1-2-1-3-2-3-4z" fill="#dfe8ee" /><circle cx="6" cy="13" r="1.800" fill="#4a90d9" /><circle cx="10" cy="9.500" r="1.800" fill="#e0a040" /><circle cx="15" cy="10" r="1.800" fill="#d04040" /><circle cx="8" cy="17.500" r="1.800" fill="#50a050" /><path d="M12 24 23 2" stroke="#c07a30" strokeWidth="2" /></svg></Under>
      <div className="flex-1" />
      <Tray />
    </div>
  );
}

export default function App() {
  return (
    <div className="w-[1920px] h-[1080px] flex flex-col overflow-hidden bg-black">
      <TopBar />
      <div className="h-px bg-[#f79a3e] shrink-0" />
      <TitleMenu />
      <Toolbar />
      <div className="flex-1 min-h-0 flex flex-col border-l-[3px] border-[#8c8c8c]">
        <div className="h-[509px] shrink-0 grid bg-black">
          <PriceSvg />
          <ChartHeader />
        </div>
        <div className="h-px shrink-0 bg-[#6e6e6e]" />
        <div className="h-[207px] shrink-0 grid bg-black">
          <VolumeSvg />
          <div className="col-start-1 row-start-1 self-start pl-[1px] pt-[3px] text-[9.5px] leading-[12px] font-['Liberation_Sans',sans-serif]">
            <span className="text-[#0000ff]">OBV</span><span className="text-white font-bold mx-[3px]">:</span>
            <span className="text-[#ff0000]">LinReg 75</span><span className="text-white font-bold mx-[3px]">:</span>
            <span className="text-[#0000ff]">OBV</span><span className="text-white font-bold mx-[3px]">:</span>
            <span className="text-[#00c800]">Volume</span><span className="text-white font-bold mx-[3px]">:</span>
            <span className="text-white">TSV 20</span>
          </div>
        </div>
        <div className="h-px shrink-0 bg-[#6e6e6e]" />
        <div className="h-[214px] shrink-0 grid bg-black">
          <StochSvg />
          <div className="col-start-1 row-start-1 self-start pl-[1px] pt-[3px] text-[9.2px] leading-[12px] font-['Liberation_Sans',sans-serif]">
            <span className="text-[#6a7a85]">Stochastics 40,5,10</span><span className="text-white font-bold mx-[3px]">:</span>
            <span className="text-[#ffff00]">BOP</span>
          </div>
        </div>
        <div className="h-px shrink-0 bg-[#c8c8c8]" />
        <div className="flex-1 bg-[#696969]" />
      </div>
      <Taskbar />
    </div>
  );
}
